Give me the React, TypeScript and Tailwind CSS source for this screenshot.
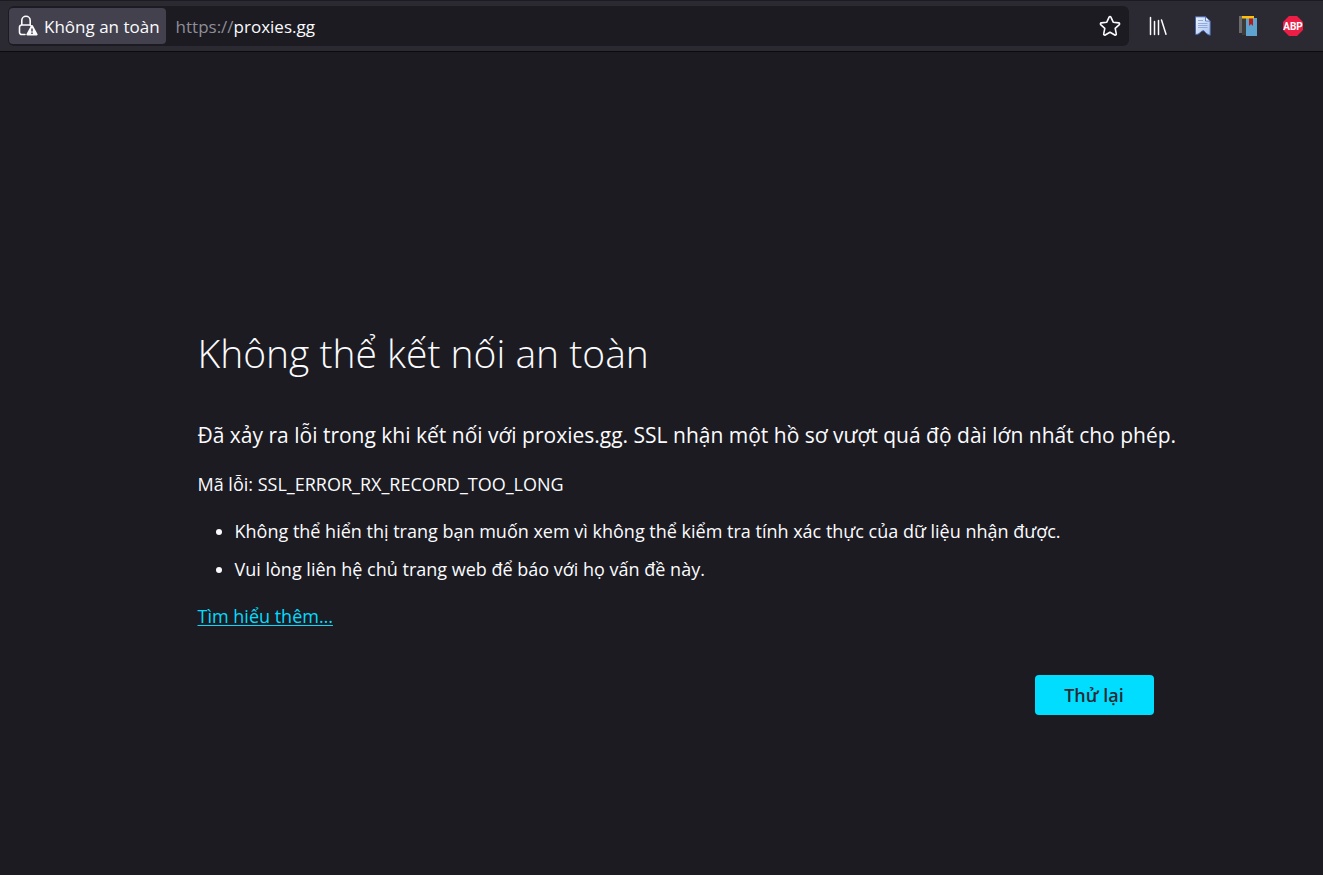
import type { ReactNode } from "react";

const hints = [
  "Không thể hiển thị trang bạn muốn xem vì không thể kiểm tra tính xác thực của dữ liệu nhận được.",
  "Vui lòng liên hệ chủ trang web để báo với họ vấn đề này."
];

type ToolbarButtonProps = {
  label: string;
  children: ReactNode;
};

function ToolbarButton({ label, children }: ToolbarButtonProps) {
  return (
    <button type="button" aria-label={label} className="flex size-6 items-center justify-center">
      {children}
    </button>
  );
}

function LockWarningIcon() {
  return (
    <svg width="20" height="22" viewBox="0 0 20 22" fill="none" aria-hidden="true">
      <path
        d="M7 19.5H3.7A2.2 2.2 0 0 1 1.5 17.3V12.200A2.2 2.2 0 0 1 3.7 10H11.5A2 2 0 0 1 13 10.7M3.8 10V5.5A4.2 4.2 0 0 1 12.200 5.5V10"
        stroke="#fbfbfe"
        strokeWidth="1.6"
        strokeLinecap="round"
      />
      <path
        d="M13.1 10.6a1 1 0 0 1 1.8 0l4.6 8.5a1 1 0 0 1-.9 1.5H9.4a1 1 0 0 1-.9-1.5z"
        fill="#fbfbfe"
      />
      <path d="M14 13.5v3M14 17.6v1.5" stroke="#42414d" strokeWidth="1.5" />
    </svg>
  );
}

function StarIcon() {
  return (
    <svg width="22" height="22" viewBox="0 0 22 22" fill="none" aria-hidden="true">
      <path
        d="M10.1 2.1a1 1 0 0 1 1.8 0l2.3 5.1 5.5.7a1 1 0 0 1 .6 1.7l-4.1 3.8 1.1 5.5a1 1 0 0 1-1.5 1.1L11 17.3l-4.8 2.7a1 1 0 0 1-1.5-1.1l1.1-5.5L1.7 9.6a1 1 0 0 1 .6-1.7l5.5-.7z"
        stroke="#fbfbfe"
        strokeWidth="1.6"
        strokeLinejoin="round"
      />
    </svg>
  );
}

function LibraryIcon() {
  return (
    <svg width="20" height="20" viewBox="0 0 20 20" fill="none" aria-hidden="true">
      <path
        d="M2.5 1.5v17M6.5 5.5v13M10.5 4.5v14M13.5 4l4.5 14.3"
        stroke="#fbfbfe"
        strokeWidth="1.5"
        strokeLinecap="round"
      />
    </svg>
  );
}

function PageIcon() {
  return (
    <svg width="20" height="20" viewBox="0 0 20 20" aria-hidden="true">
      <defs>
        <linearGradient id="page-fill" x1="0" y1="0" x2="1" y2="1">
          <stop offset="0" stopColor="#edf3fd" />
          <stop offset="1" stopColor="#a9c3f0" />
        </linearGradient>
      </defs>
      <path
        d="M2.5.8H12.5L17.2 5v14.2c-2.4-.3-4.400-1.900-6.200-4.400-1.800-.2-2.800.6-3.800 1.800-1.300 1.500-2.800 2.100-4.700 1.700z"
        fill="url(#page-fill)"
        stroke="#4467ad"
      />
      <path d="M12.5.8V5h4.7z" fill="#f4f8ff" stroke="#4467ad" strokeWidth=".8" />
      <path d="M5 4.500h5M5 7.500h9.500M5 9.500h9.500M5 11.500h9.500" stroke="#8fabe0" />
    </svg>
  );
}

function BooksIcon() {
  return (
    <svg width="20" height="20" viewBox="0 0 20 20" aria-hidden="true">
      <path d="M1 0h4v17H1z" fill="#6b6b6b" />
      <path d="M4 1h4v18H4z" fill="#3c3c3c" />
      <path d="M8 2h11v18H8z" fill="#5fa4cf" />
      <path d="M4 0h12v2.5H4z" fill="#ffc107" />
      <path d="M11 2.5h4V10l-2-2-2 2z" fill="#b71c1c" />
    </svg>
  );
}

function AdblockIcon() {
  return (
    <svg width="20" height="20" viewBox="0 0 20 20" aria-hidden="true">
      <path d="M6 0h8l6 6v8l-6 6H6l-6-6V6z" fill="#ed1e45" />
      <text
        x="10"
        y="14"
        textAnchor="middle"
        fill="#ffffff"
        fontFamily="'Liberation Sans Narrow', Roboto, sans-serif"
        fontSize="10"
        fontWeight="700"
      >
        ABP
      </text>
    </svg>
  );
}

function BrowserToolbar() {
  return (
    <header className="flex h-[52px] items-center border-t border-b border-t-[#1c1b22] border-b-[#0c0c0d] bg-[#2b2a33] pr-[18px] pl-2">
      <div className="flex h-10 flex-1 items-center rounded-md bg-[#1c1b22] pr-[7px] pl-px">
        <button
          type="button"
          className="flex h-9 items-center gap-1.5 rounded bg-[#42414d] pr-1.5 pl-[9px] text-[17px] whitespace-nowrap text-[#fbfbfe]"
        >
          <LockWarningIcon />
          <span className="pt-0.5">Không an toàn</span>
        </button>
        <label className="flex flex-1 items-center pt-0.5 pl-2.5 text-[17px]">
          <span className="text-[#8f8e96]">https://</span>
          <input
            type="text"
            aria-label="Địa chỉ trang web"
            defaultValue="proxies.gg"
            className="min-w-0 flex-1 bg-transparent text-[#fbfbfe] outline-none"
          />
        </label>
        <ToolbarButton label="Đánh dấu trang">
          <StarIcon />
        </ToolbarButton>
      </div>
      <div className="ml-[17px] flex items-center gap-[21px]">
        <ToolbarButton label="Thư viện">
          <LibraryIcon />
        </ToolbarButton>
        <ToolbarButton label="Trang đã lưu">
          <PageIcon />
        </ToolbarButton>
        <ToolbarButton label="Sổ dấu trang">
          <BooksIcon />
        </ToolbarButton>
        <ToolbarButton label="Adblock Plus">
          <AdblockIcon />
        </ToolbarButton>
      </div>
    </header>
  );
}

export default function App() {
  return (
    <div className="flex min-h-screen flex-col bg-[#1c1b22] font-['Open_Sans','Noto_Sans',sans-serif] text-[#fbfbfe]">
      <BrowserToolbar />
      <main className="flex flex-1 flex-col pt-[271px] pr-6 pb-12 pl-[58px]">
        <div className="mx-auto w-full max-w-[962px]">
          <h1 className="text-[39px] leading-[60px] font-light">Không thể kết nối an toàn</h1>
          <p className="mt-9 text-[21px] leading-8 xl:whitespace-nowrap">
            Đã xảy ra lỗi trong khi kết nối với proxies.gg. SSL nhận một hồ sơ vượt quá độ dài lớn nhất cho phép.
          </p>
          <p className="mt-[19px] text-[18px] leading-7">Mã lỗi: SSL_ERROR_RX_RECORD_TOO_LONG</p>
          <ul className="mt-[19px] list-disc space-y-2.5 pl-[37px] text-[18px] leading-7">
            {hints.map((hint) => (
              <li key={hint}>{hint}</li>
            ))}
          </ul>
          <p className="mt-[19px] text-[18px] leading-7">
            <a href="#learn-more" className="text-[#00ddff] underline underline-offset-2">
              Tìm hiểu thêm…
            </a>
          </p>
          <div className="mt-[45px] flex justify-end pr-1.5">
            <button
              type="button"
              className="h-10 min-w-[119px] rounded bg-[#00ddff] px-6 text-[18px] font-semibold text-[#2b2a33]"
            >
              Thử lại
            </button>
          </div>
        </div>
      </main>
    </div>
  );
}
